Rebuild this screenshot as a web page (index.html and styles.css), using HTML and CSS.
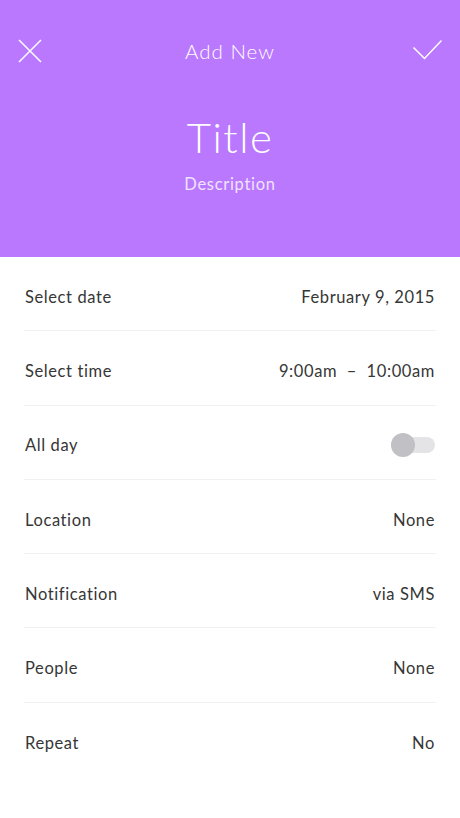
FILE: index.html
```html
<!DOCTYPE html>
<html>
<head>
<meta charset="utf-8">
<link rel="stylesheet" href="styles.css">
</head>
<body>
<div class="screen">
  <header class="hero">
    <div class="nav">
      <button class="icon-btn" aria-label="Close">
        <svg width="24" height="24" viewBox="0 0 24 24"><path d="M1 1 L23 23 M23 1 L1 23" stroke="#fff" stroke-width="1.5" fill="none"/></svg>
      </button>
      <div class="nav-title">Add New</div>
      <button class="icon-btn" aria-label="Done">
        <svg width="30" height="24" viewBox="0 0 30 24"><path d="M1.5 8.5 L12.5 19.5 L29.5 1.5" stroke="#fff" stroke-width="1.5" fill="none"/></svg>
      </button>
    </div>
    <h1 class="title">Title</h1>
    <div class="desc">Description</div>
  </header>
  <ul class="list">
    <li class="row"><span>Select date</span><span>February 9, 2015</span></li>
    <li class="row"><span>Select time</span><span>9:00am&nbsp; –&nbsp; 10:00am</span></li>
    <li class="row"><span>All day</span><span class="toggle"><span class="knob"></span></span></li>
    <li class="row"><span>Location</span><span>None</span></li>
    <li class="row"><span>Notification</span><span>via SMS</span></li>
    <li class="row"><span>People</span><span>None</span></li>
    <li class="row last"><span>Repeat</span><span>No</span></li>
  </ul>
</div>
</body>
</html>
```
FILE: styles.css
```css
* { box-sizing: border-box; }
html, body { margin: 0; padding: 0; background: #fff; }
body { font-family: Lato, "Open Sans", sans-serif; width: 460px; height: 818px; overflow: hidden; }
.screen { width: 460px; }
.hero {
  background: #ba78fe;
  height: 257px;
  padding: 39px 18px 0 18px;
  color: #fff;
  text-align: center;
}
.nav { display: flex; align-items: center; justify-content: space-between; height: 24px; }
.icon-btn { background: none; border: 0; padding: 0; width: 30px; height: 24px; display: flex; align-items: center; justify-content: flex-start; cursor: pointer; }
.icon-btn:last-child { justify-content: flex-end; }
.icon-btn svg { display: block; }
.nav-title { font-size: 20.5px; font-weight: 300; letter-spacing: 1px; }
.title { margin: 50px 0 0; font-size: 42px; font-weight: 300; line-height: 48px; letter-spacing: 1.5px; }
.desc { margin-top: 13px; font-size: 16.5px; font-weight: 400; color: #efe2ff; letter-spacing: 0.7px; }
.list { list-style: none; margin: 0; padding: 0 24px; }
.row {
  display: flex; justify-content: space-between; align-items: center;
  height: 74.3px; padding: 6px 1px 0 1px;
  border-bottom: 1px solid #f0f0f0;
  font-size: 16.5px; color: #363636; letter-spacing: 0.6px;
}
.row.last { border-bottom: 0; }
.toggle { position: relative; width: 44px; height: 16px; border-radius: 8px; background: #e4e4e6; }
.knob { position: absolute; left: 0; top: -4px; width: 24px; height: 24px; border-radius: 50%; background: #c1c0c5; }
```
